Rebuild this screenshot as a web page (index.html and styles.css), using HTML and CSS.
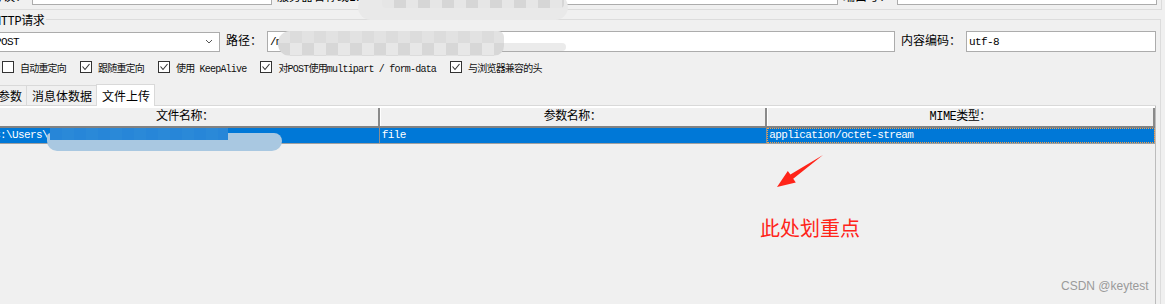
FILE: index.html
```html
<!DOCTYPE html>
<html lang="zh-CN">
<head>
<meta charset="UTF-8">
<meta name="viewport" content="width=device-width, initial-scale=1.0">
<title>HTTP请求 - 文件上传</title>
<link rel="stylesheet" href="styles.css">
</head>
<body>
<div class="server-group">
    <div class="field-row">
        <span class="label proto-label">协议：</span>
        <input type="text" class="text-input proto" value="http" readonly>
        <span class="label host-label">服务器名称或IP：</span>
        <input type="text" class="text-input host" value="" readonly>
        <span class="label port-label">端口号：</span>
        <input type="text" class="text-input port" value="" readonly>
    </div>
</div>
<fieldset class="http-group">
    <legend>HTTP请求</legend>
    <div class="field-row">
        <div class="select">
            <span>POST</span>
            <svg class="chevron" width="8" height="5" viewBox="0 0 8 5"><polyline points="1,1 4,4 7,1" fill="none" stroke="#555" stroke-width="1"/></svg>
        </div>
        <span class="label path-label">路径：</span>
        <input type="text" class="text-input path" value="/m" readonly>
        <span class="label enc-label">内容编码：</span>
        <input type="text" class="text-input encoding" value="utf-8" readonly>
    </div>
    <div class="options">
        <label class="check"><span class="box"></span>自动重定向</label>
        <label class="check"><span class="box"><svg width="10" height="10" viewBox="0 0 10 10"><polyline points="1.5,4.5 4,7.5 8.5,2" fill="none" stroke="#333" stroke-width="1.1"/></svg></span>跟随重定向</label>
        <label class="check"><span class="box"><svg width="10" height="10" viewBox="0 0 10 10"><polyline points="1.5,4.5 4,7.5 8.5,2" fill="none" stroke="#333" stroke-width="1.1"/></svg></span>使用 KeepAlive</label>
        <label class="check"><span class="box"><svg width="10" height="10" viewBox="0 0 10 10"><polyline points="1.5,4.5 4,7.5 8.5,2" fill="none" stroke="#333" stroke-width="1.1"/></svg></span>对POST使用multipart / form-data</label>
        <label class="check"><span class="box"><svg width="10" height="10" viewBox="0 0 10 10"><polyline points="1.5,4.5 4,7.5 8.5,2" fill="none" stroke="#333" stroke-width="1.1"/></svg></span>与浏览器兼容的头</label>
    </div>
    <div class="tabs">
        <div class="tab">参数</div>
        <div class="tab">消息体数据</div>
        <div class="tab active">文件上传</div>
    </div>
    <div class="tab-panel">
        <div class="table-pane">
            <div class="table-row header">
                <div class="th">文件名称：</div>
                <div class="th">参数名称：</div>
                <div class="th">MIME类型：</div>
            </div>
            <div class="table-row selected">
                <div class="td">C:\Users\</div>
                <div class="td">file</div>
                <div class="td focus">application/octet-stream</div>
            </div>
        </div>
    </div>
</fieldset>

<!-- redacted areas -->
<div class="smudge top-soft"></div>
<div class="smudge top-mosaic"></div>
<div class="smudge path-strip"></div>
<div class="smudge path-mosaic"></div>
<div class="smudge row-soft"></div>
<div class="smudge row-mosaic"></div>

<!-- annotation -->
<svg class="arrow" width="60" height="42" viewBox="0 0 60 42">
    <polygon points="53,5 20.4,24.6 17.8,21 7,37 25.8,32.4 23.2,28.8" fill="#ff2419"/>
</svg>
<div class="note">此处划重点</div>
<div class="watermark">CSDN @keytest</div>
</body>
</html>
```

FILE: styles.css
```css
html, body {
    overflow: hidden;
}
body {
    margin: 0;
    background-color: #f0f0f0;
    font-family: "Noto Sans CJK SC", sans-serif;
    font-size: 12px;
    color: #000;
}
.server-group {
    margin: -16px 3px 0 -10px;
    padding: 0 4px 4px 1px;
    border-right: 1px solid #dcdcdc;
    border-bottom: 1px solid #dcdcdc;
}
.field-row {
    display: flex;
    align-items: center;
    height: 21px;
}
.label {
    white-space: nowrap;
    line-height: 16px;
    font-family: "Liberation Mono", "Noto Sans CJK SC", monospace;
}
.server-group .label {
    padding-top: 7px;
}
.text-input {
    box-sizing: border-box;
    height: 21px;
    margin: 0;
    padding: 0 2px;
    border: 1px solid #acacac;
    background-color: #fff;
    font-family: "Liberation Mono", "Noto Sans CJK SC", monospace;
    font-size: 11px;
    letter-spacing: -0.6px;
    color: #000;
    outline: none;
}
.proto-label {
    width: 36px;
    margin-right: 5px;
}
.proto {
    width: 240px;
}
.host-label {
    margin: 0 4px 0 5px;
}
.host {
    flex: 1;
    min-width: 0;
}
.port-label {
    margin: 0 6px 0 5px;
}
.port {
    width: 260px;
}
.http-group {
    margin: -2px 4px 0 -12px;
    padding: 0 4px 0 3px;
    border: 1px solid #dcdcdc;
    min-width: 0;
}
.http-group legend {
    padding: 6px 2px 0;
    line-height: 16px;
    font-family: "Liberation Mono", "Noto Sans CJK SC", monospace;
    letter-spacing: -0.4px;
}
.http-group .field-row {
    margin-top: 1px;
}
.select {
    box-sizing: border-box;
    width: 228px;
    height: 20px;
    padding-left: 2px;
    display: flex;
    align-items: center;
    justify-content: space-between;
    border: 1px solid #acacac;
    background-color: #fff;
    font-family: "Liberation Mono", monospace;
    font-size: 11px;
    letter-spacing: -0.6px;
}
.chevron {
    margin-right: 6px;
}
.path-label {
    margin: 0 5px 0 6px;
}
.path {
    flex: 1;
    min-width: 0;
}
.enc-label {
    margin: 0 5px 0 6px;
}
.encoding {
    width: 190px;
}
.options {
    display: flex;
    align-items: center;
    gap: 14px;
    height: 14px;
    margin-top: 8px;
    padding-left: 10px;
    font-family: "Liberation Mono", "Noto Sans CJK SC", monospace;
    font-size: 10px;
    letter-spacing: -0.8px;
    color: #111;
}
.check {
    display: flex;
    align-items: center;
    gap: 6px;
    white-space: nowrap;
}
.box {
    box-sizing: border-box;
    width: 12px;
    height: 12px;
    display: flex;
    align-items: center;
    justify-content: center;
    border: 1px solid #333;
    background-color: #fff;
}
.tabs {
    display: flex;
    align-items: flex-end;
    height: 21px;
    margin-top: 10px;
}
.tab {
    box-sizing: border-box;
    height: 20px;
    padding: 0 4px 0 5px;
    border: 1px solid #d9d9d9;
    border-bottom: none;
    line-height: 19px;
    white-space: nowrap;
}
.tab + .tab {
    margin-left: -1px;
}
.tab.active {
    position: relative;
    height: 22px;
    margin-bottom: -1px;
    background-color: #fff;
    line-height: 21px;
}
.tab-panel {
    border-top: 1px solid #d9d9d9;
}
.table-pane {
    height: 210px;
    border-right: 1px solid #bcbcbc;
}
.table-row {
    display: grid;
    grid-template-columns: 1fr 1fr 1fr;
}
.header {
    border-top: 2px solid #fff;
    border-bottom: 2px solid #828282;
}
.th {
    height: 18px;
    line-height: 18px;
    text-align: center;
    border-right: 2px solid #8a8a8a;
    box-shadow: inset 1px 0 #fff;
    font-family: "Liberation Mono", "Noto Sans CJK SC", monospace;
    letter-spacing: -0.5px;
}
.selected {
    background-color: #0078d7;
    border-bottom: 1px solid #a0a0a0;
}
.td {
    height: 15px;
    padding-left: 2px;
    line-height: 15px;
    border-right: 1px solid #8f8f8f;
    color: #fff;
    font-family: "Liberation Mono", monospace;
    font-size: 11px;
    letter-spacing: -0.6px;
    white-space: nowrap;
    overflow: hidden;
}
.td.focus {
    outline: 1px dotted #f5a04a;
    outline-offset: -1px;
}
.smudge {
    position: absolute;
}
.top-soft {
    left: 358px;
    top: -6px;
    width: 210px;
    height: 26px;
    border-radius: 13px;
    background-color: #e9e9e9;
}
.top-mosaic {
    left: 382px;
    top: -4px;
    width: 182px;
    height: 12px;
    border-radius: 4px;
    background: conic-gradient(#d6d6d6 25%, #e2e2e2 0 50%, #dadada 0 75%, #e6e6e6 0) 0 0 / 24px 24px;
}
.path-strip {
    left: 300px;
    top: 43px;
    width: 266px;
    height: 8px;
    border-radius: 0 4px 4px 0;
    background-color: #ebebeb;
}
.path-mosaic {
    left: 278px;
    top: 31px;
    width: 226px;
    height: 25px;
    border-radius: 12px 6px 10px 12px;
    background: conic-gradient(#dcdcdc 25%, #e7e7e7 0 50%, #d7d7d7 0 75%, #e2e2e2 0) 0 0 / 24px 24px;
}
.row-soft {
    left: 47px;
    top: 133px;
    width: 235px;
    height: 18px;
    border-radius: 4px 8px 10px 10px;
    background-color: #a9c8e1;
}
.row-mosaic {
    left: 50px;
    top: 128px;
    width: 178px;
    height: 12px;
    background: conic-gradient(#2a89d8 25%, #1f80d6 0 50%, #3993dc 0 75%, #2786d8 0) 0 0 / 24px 24px;
}
.arrow {
    position: absolute;
    left: 770px;
    top: 150px;
}
.note {
    position: absolute;
    left: 760px;
    top: 216px;
    font-size: 20px;
    line-height: 24px;
    color: #ff2419;
}
.watermark {
    position: absolute;
    left: 1061px;
    top: 279px;
    font-family: "Liberation Sans", sans-serif;
    font-size: 12px;
    color: #9a9a9a;
}
```
